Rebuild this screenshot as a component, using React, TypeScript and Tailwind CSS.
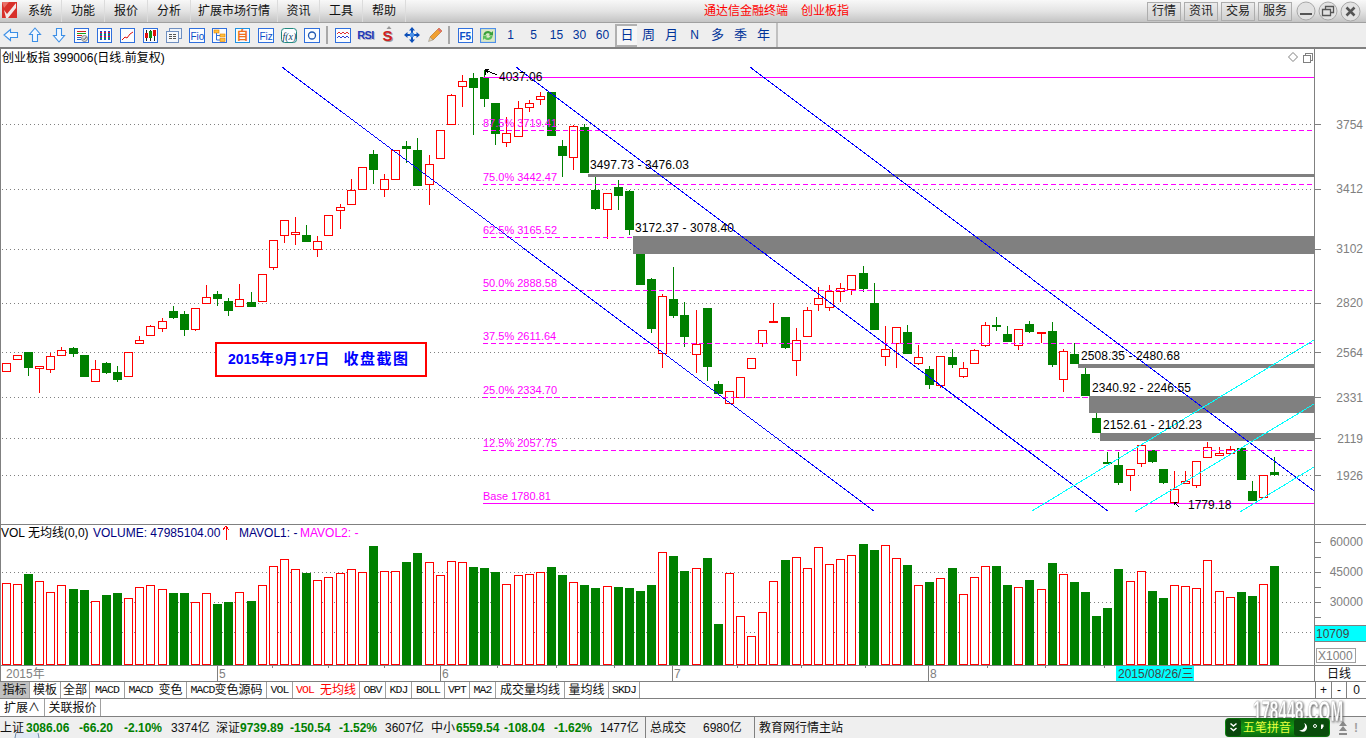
import React from "react";

const R = 1;
const G = 0;
// top, bottom, high, low (0 = no wick), colour
const bars: number[][] = [
  [363,371,0,0,R],[355,359,0,0,R],[352,367,0,376,G],[366,368,0,393,R],[356,369,353,373,R],[350,355,347,356,R],[348,353,347,357,G],[355,376,0,0,G],
  [369,381,360,382,R],[363,372,362,374,G],[372,379,366,382,G],[352,376,0,0,R],[340,343,336,0,R],[326,335,325,0,R],[321,328,318,332,R],[311,317,306,319,G],
  [314,329,311,336,G],[308,329,0,331,R],[297,303,285,0,R],[294,298,291,306,G],[301,310,298,316,G],[299,306,284,0,R],[302,306,292,307,G],[274,301,0,0,R],
  [240,267,0,270,R],[220,235,0,243,R],[232,234,217,245,R],[235,241,225,242,G],[241,249,236,257,R],[215,235,0,0,R],[207,210,204,229,R],[190,204,179,0,R],
  [167,189,0,0,R],[154,169,150,184,G],[179,189,174,197,R],[150,179,0,0,R],[146,148,141,163,G],[150,185,138,0,G],[164,184,155,205,R],[130,158,0,0,R],
  [95,124,94,0,R],[81,86,75,107,R],[78,87,73,135,G],[77,98,70,107,G],[103,133,0,145,G],[133,142,117,147,R],[108,136,101,137,R],[103,107,100,112,R],
  [96,99,92,105,R],[92,135,0,136,G],[146,155,140,177,G],[126,157,125,170,R],[127,172,124,173,G],[190,208,177,210,G],[193,209,0,239,R],[187,195,180,210,G],
  [191,229,190,235,G],[240,284,0,285,G],[279,328,278,333,G],[296,353,294,368,R],[299,315,267,318,G],[315,336,302,347,G],[344,354,310,373,R],[308,366,0,381,G],
  [384,393,381,0,G],[391,403,0,0,R],[377,397,0,0,R],[358,368,0,369,R],[330,343,0,347,R],[321,322,303,0,R],[317,347,0,349,G],[340,360,328,376,R],
  [310,336,307,0,R],[298,304,287,311,R],[291,307,285,311,R],[288,291,283,302,R],[275,289,0,295,R],[273,288,266,292,G],[303,329,283,330,G],[349,356,326,366,R],
  [327,343,0,368,R],[332,353,325,354,G],[357,363,345,365,R],[369,384,366,389,G],[356,385,0,388,R],[357,364,349,368,G],[368,376,362,378,R],[350,363,349,0,R],
  [325,345,322,347,R],[325,326,317,331,G],[334,341,326,0,G],[329,345,0,350,R],[324,331,321,333,G],[332,333,0,343,R],[331,364,322,367,G],[351,379,349,392,R],
  [354,363,343,0,G],[374,395,368,0,G],[418,432,413,0,G],[462,463,452,0,G],[465,482,452,485,G],[469,475,0,491,R],[445,463,0,467,R],[450,461,0,463,G],
  [469,482,0,484,G],[489,502,471,0,R],[481,483,471,0,R],[461,485,0,488,R],[447,457,442,458,R],[453,455,447,0,R],[449,453,446,0,R],[448,479,0,0,G],
  [491,500,481,0,G],[475,497,0,498,R],[472,474,457,476,G],
];
// top of each volume bar; negative = green
const vols = [
  583,584,-574,581,592,585,-589,-590,601,-595,-593,598,587,585,589,-593,-593,602,593,-604,-602,592,-601,585,566,559,569,-573,580,577,573,569,
  572,-546,571,571,-562,-553,562,575,561,562,-567,-568,-572,584,575,574,572,-567,-575,582,-585,-588,586,-587,-588,-591,-585,552,-556,-571,
  568,-558,-624,573,616,636,612,581,-560,557,568,547,564,559,555,-544,-550,545,558,-565,585,-582,578,-568,594,577,566,-566,-585,587,-580,589,
  -563,574,-582,-592,-616,-608,-569,581,571,-591,-598,585,586,588,560,591,597,-592,-596,584,-566,
];
const cx = (i: number) => Math.floor(6.3 + 11.126 * i);

const RED = "#ff0000";
const GREEN = "#008000";
const GRAY = "#808080";

function Bar({ i, top, bot, color }: { i: number; top: number; bot: number; color: number }) {
  const x = cx(i) - 4;
  if (color === G) return <rect x={x} y={top} width={9} height={bot - top + 1} fill={GREEN} />;
  return <rect x={x + 0.5} y={top + 0.5} width={8} height={Math.max(bot - top, 1)} fill="#fff" stroke={RED} />;
}

const fibs = [
  ["87.5% 3719.41", 130, 127],
  ["75.0% 3442.47", 184, 181],
  ["62.5% 3165.52", 237, 234],
  ["50.0% 2888.58", 290, 287],
  ["37.5% 2611.64", 343, 340],
  ["25.0% 2334.70", 397, 394],
  ["12.5% 2057.75", 450, 447],
] as const;
const zones = [
  [588, 174, 3],
  [633, 236, 18],
  [1078, 364, 4],
  [1089, 396, 17],
  [1100, 433, 8],
];
const zoneLabels = [
  ["3497.73 - 3476.03", 590, 169],
  ["3172.37 - 3078.40", 635, 232],
  ["2508.35 - 2480.68", 1081, 360],
  ["2340.92 - 2246.55", 1092, 392],
  ["2152.61 - 2102.23", 1103, 429],
] as const;
const grid = [124, 189, 249, 303, 352, 397, 438, 475];
const axisLabels = [
  ["3754", 125],
  ["3412", 189],
  ["3102", 249],
  ["2820", 303],
  ["2564", 353],
  ["2331", 398],
  ["2119", 439],
  ["1926", 476],
] as const;

function PriceChart() {
  return (
    <svg width={1366} height={475} viewBox="0 49 1366 475" className="block">
      <rect x={0} y={49} width={1366} height={475} fill="#fff" />
      <rect x={0} y={49} width={1} height={475} fill={GRAY} />
      <rect x={1314} y={49} width={1} height={475} fill={GRAY} />
      <g shapeRendering="crispEdges">
        {grid.map((y) => (
          <line key={y} x1={2} x2={1314} y1={y + 0.5} y2={y + 0.5} stroke={GRAY} strokeDasharray="1 3" />
        ))}
        {grid.map((y) => (
          <rect key={y} x={1315} y={y} width={6} height={1} fill={GRAY} />
        ))}
        {bars.map(([t, b, h, l, c], i) => (
          <g key={i}>
            {h > 0 && <rect x={cx(i)} y={h} width={1} height={t - h} fill={c === R ? RED : GREEN} />}
            {l > 0 && <rect x={cx(i)} y={b} width={1} height={l - b} fill={c === R ? RED : GREEN} />}
            <Bar i={i} top={t} bot={b} color={c} />
          </g>
        ))}
        {fibs.map(([, y]) => (
          <line key={y} x1={483} x2={1314} y1={y + 0.5} y2={y + 0.5} stroke="#ff00ff" strokeDasharray="5 3" />
        ))}
        <line x1={483} x2={1314} y1={77.5} y2={77.5} stroke="#ff00ff" />
        <line x1={483} x2={1314} y1={503.5} y2={503.5} stroke="#ff00ff" />
        {zones.map(([x, y, h]) => (
          <rect key={x} x={x} y={y} width={1314 - x} height={h} fill={GRAY} />
        ))}
        <line x1={282} y1={67} x2={874} y2={511} stroke="#0000ff" />
        <line x1={516} y1={67} x2={1108} y2={511} stroke="#0000ff" />
        <line x1={750} y1={67} x2={1314} y2={491} stroke="#0000ff" />
        <line x1={1032} y1={511} x2={1314} y2={340} stroke="#00ffff" />
        <line x1={1135} y1={512} x2={1314} y2={404} stroke="#00ffff" />
        <line x1={1240} y1={512} x2={1314} y2={467} stroke="#00ffff" />
      </g>
      <g fontSize={11} fill="#ff00ff">
        {fibs.map(([t, , y]) => (
          <text key={t} x={483} y={y}>
            {t}
          </text>
        ))}
        <text x={483} y={500}>
          Base 1780.81
        </text>
      </g>
      <g fontSize={12} fill="#000">
        {zoneLabels.map(([t, x, y]) => (
          <text key={t} x={x} y={y} textLength={99}>
            {t}
          </text>
        ))}
        <text x={499} y={81}>
          4037.06
        </text>
        <text x={1188} y={509}>
          1779.18
        </text>
        <text x={2} y={62}>
          创业板指 399006(日线.前复权)
        </text>
      </g>
      <g fill="none" stroke="#000" shapeRendering="crispEdges">
        <path d="M485 75V69h4M485 70L497 75M485 70l3 3" />
        <path d="M1179 507L1174 502M1174 502v3M1174 502h3" />
      </g>
      <g fill="none" stroke={GRAY}>
        <path d="M1293 52.5l4.5 4.5-4.5 4.5-4.5-4.5z" />
        <path d="M1303.5 55.5h7v7h-7zM1305.5 55.5v-2h7v7h-2" shapeRendering="crispEdges" />
      </g>
      <g fontSize={12} fill={GRAY} textAnchor="end">
        {axisLabels.map(([t, y]) => (
          <text key={t} x={1363} y={y + 4}>
            {t}
          </text>
        ))}
      </g>
    </svg>
  );
}

function VolumeChart() {
  return (
    <svg width={1366} height={141} viewBox="0 524 1366 141" className="block">
      <rect x={0} y={524} width={1366} height={141} fill="#fff" />
      <rect x={0} y={524} width={1366} height={1} fill={GRAY} />
      <rect x={0} y={524} width={1} height={141} fill={GRAY} />
      <rect x={1314} y={524} width={1} height={141} fill={GRAY} />
      <g shapeRendering="crispEdges">
        {[572, 602, 632].map((y) => (
          <line key={y} x1={2} x2={1314} y1={y + 0.5} y2={y + 0.5} stroke={GRAY} strokeDasharray="1 3" />
        ))}
        {[542, 557, 572, 587, 602, 617].map((y) => (
          <rect key={y} x={1315} y={y} width={6} height={1} fill={GRAY} />
        ))}
        {vols.map((v, i) => (
          <Bar key={i} i={i} top={Math.abs(v)} bot={664} color={v < 0 ? G : R} />
        ))}
      </g>
      <g fontSize={12}>
        <text x={1} y={537} fill="#000">
          VOL 无均线(0,0)
        </text>
        <text x={93} y={537} fill="#000080">
          VOLUME: 47985104.00
        </text>
        <text x={239} y={537} fill="#000080">
          MAVOL1: -
        </text>
        <text x={300} y={537} fill="#ff00ff">
          MAVOL2: -
        </text>
      </g>
      <path d="M226 540V527M223 530l3-4 3 4" stroke={RED} fill="none" shapeRendering="crispEdges" />
      <g fontSize={12} fill={GRAY} textAnchor="end">
        <text x={1363} y={546}>
          60000
        </text>
        <text x={1363} y={576}>
          45000
        </text>
        <text x={1363} y={606}>
          30000
        </text>
      </g>
      <rect x={1315} y={625} width={51} height={17} fill="#00ffff" />
      <rect x={1315} y={625} width={51} height={1} fill={GRAY} />
      <rect x={1315} y={641} width={51} height={1} fill={GRAY} />
      <text x={1316} y={638} fontSize={12} fill="#444">
        10709
      </text>
      <rect x={1316.5} y={648.5} width={39} height={14} fill="#fff" stroke="#a0a0a0" shapeRendering="crispEdges" />
      <text x={1318} y={660} fontSize={12} fill={GRAY}>
        X1000
      </text>
    </svg>
  );
}

function DateAxis() {
  const majors = [
    [217, "5"],
    [440, "6"],
    [672, "7"],
    [928, "8"],
  ] as const;
  return (
    <svg width={1366} height={17} viewBox="0 665 1366 17" className="block">
      <rect x={0} y={665} width={1366} height={17} fill="#fff" />
      <g shapeRendering="crispEdges" fill={GRAY}>
        <rect x={0} y={665} width={1366} height={1} />
        <rect x={0} y={681} width={1366} height={1} />
        <rect x={1314} y={665} width={1} height={17} />
        <rect x={0} y={665} width={1} height={17} />
        {majors.map(([x]) => (
          <rect key={x} x={x} y={665} width={1} height={17} />
        ))}
        {[272, 328, 384, 497, 556, 614, 737, 801, 865, 987, 1045, 1104].map((x) => (
          <rect key={x} x={x} y={665} width={1} height={3} />
        ))}
      </g>
      <g fontSize={12} fill={GRAY}>
        <text x={6} y={678}>
          2015年
        </text>
        {majors.map(([x, t]) => (
          <text key={x} x={x + 2} y={678}>
            {t}
          </text>
        ))}
      </g>
      <rect x={1116} y={666} width={78} height={15} fill="#00ffff" />
      <text x={1118} y={678} fontSize={12} fill="#444">
        2015/08/26/三
      </text>
      <text x={1327} y={678} fontSize={12} fill="#111">
        日线
      </text>
    </svg>
  );
}

/* ---------- toolbar icons ---------- */
const BLUE = "#2f6fdc";

function Frame({ children, stroke = BLUE, w = 15 }: { children?: React.ReactNode; stroke?: string; w?: number }) {
  return (
    <svg width={w} height={15} viewBox={`0 0 ${w} 15`}>
      <rect x={0.5} y={0.5} width={w - 1} height={14} fill="#fbfdff" stroke={stroke} shapeRendering="crispEdges" />
      {children}
    </svg>
  );
}

function ArrowIcon({ dir }: { dir: "left" | "up" | "down" }) {
  const rot = dir === "left" ? 0 : dir === "up" ? 90 : -90;
  return (
    <svg width={16} height={16} viewBox="0 0 16 16">
      <path
        d="M1 8L7.5 2.5V5.5H14.5V10.5H7.5V13.5Z"
        fill="#f1f8ff"
        stroke="#3c8fe6"
        strokeWidth={1.1}
        transform={`rotate(${rot} 8 8)`}
      />
    </svg>
  );
}

function Slot({ children, className = "w-[23px]" }: { children: React.ReactNode; className?: string }) {
  return <div className={`flex shrink-0 items-center justify-center ${className}`}>{children}</div>;
}

function Toolbar() {
  return (
    <div className="flex h-[26px] items-center border-b-2 border-[#808080] bg-[#eeeeee]">
      <div className="flex h-full items-center">
        <Slot className="w-[22px]">
          <ArrowIcon dir="left" />
        </Slot>
        <Slot className="w-[25px]">
          <ArrowIcon dir="up" />
        </Slot>
        <Slot>
          <ArrowIcon dir="down" />
        </Slot>
        <Slot>
          <Frame>
            <path d="M3 3.5h9" stroke="#d02020" />
            <path d="M3 5.5h9" stroke="#18a018" />
            <path d="M3 7.5h5" stroke="#d02020" />
            <path d="M3 9.5h4M3 11.5h4" stroke="#2060c0" />
            <circle cx={10.5} cy={10.5} r={3} fill="#ddd" stroke="#888" />
            <path d="M9 10.5l1.2 1.2L12.4 9" fill="none" stroke="#555" />
          </Frame>
        </Slot>
        <Slot>
          <Frame>
            <path d="M3 3h2v9H3zM7 3h2v9H7zM11 3h2v9h-2z" fill="#2040d0" />
            <path d="M3 4.5h10M3 8.5h10" stroke="#e02020" strokeDasharray="2 2" />
            <path d="M3 6.5h10M3 10.5h10" stroke="#10a030" strokeDasharray="2 2" />
          </Frame>
        </Slot>
        <Slot>
          <Frame>
            <path d="M2 12l3-3 2 1 3-4 3-2" fill="none" stroke="#e01010" />
          </Frame>
        </Slot>
        <Slot>
          <Frame>
            <path d="M3.5 2v11M7.5 2v11M11.5 2v11" stroke="#222" />
            <rect x={2} y={5} width={3} height={5} fill="#e01010" />
            <rect x={6} y={3} width={3} height={7} fill="#109010" />
            <rect x={10} y={2} width={3} height={6} fill="#e01010" />
          </Frame>
        </Slot>
        <Slot>
          <svg width={16} height={15} viewBox="0 0 16 15">
            <rect x={3.5} y={0.5} width={12} height={10} fill="#eef3fa" stroke="#6f8fc0" />
            <rect x={0.5} y={3.5} width={12} height={11} fill="#f5f8fc" stroke="#6f8fc0" />
            <path d="M3 6.5h3M7 6.5h3M3 8.5h3M7 8.5h3M3 10.5h3M7 10.5h3" stroke="#555" />
          </svg>
        </Slot>
        <Slot>
          <Frame w={16}>
            <text x={1.5} y={11.5} fontSize={10} fill="#0b4fc8">
              Fio
            </text>
          </Frame>
        </Slot>
        <Slot>
          <Frame>
            <rect x={2} y={2} width={5} height={3} fill="#ffc040" stroke="#e08000" strokeWidth={0.6} />
            <rect x={8} y={6} width={5} height={3} fill="#ffc040" stroke="#e08000" strokeWidth={0.6} />
            <rect x={8} y={10.5} width={5} height={3} fill="#ffc040" stroke="#e08000" strokeWidth={0.6} />
            <path d="M4.5 5v7H8M4.5 7.5H8" fill="none" stroke="#2f6fdc" />
          </Frame>
        </Slot>
        <Slot>
          <Frame stroke="#2090e0">
            <text x={1.5} y={12} fontSize={12} fill="#f07020" fontWeight={700}>
              自
            </text>
          </Frame>
        </Slot>
        <Slot>
          <Frame w={16}>
            <text x={1.5} y={11.5} fontSize={10} fill="#0b4fc8">
              Fiz
            </text>
          </Frame>
        </Slot>
        <Slot>
          <svg width={16} height={15} viewBox="0 0 16 15">
            <rect x={0.5} y={0.5} width={15} height={14} rx={3} fill="#fbfdff" stroke="#208880" />
            <text x={1.5} y={11.5} fontSize={10} fontStyle="italic" fill="#104060" className="font-['Liberation_Serif',serif]">
              f(x)
            </text>
          </svg>
        </Slot>
        <Slot>
          <Frame w={16}>
            <circle cx={8} cy={7.5} r={3.5} fill="none" stroke="#2058b0" strokeWidth={1.3} />
          </Frame>
        </Slot>
      </div>
      <div className="mx-[3px] h-[18px] w-[2px] shrink-0 bg-[#a8a8a8]" />
      <div className="flex h-full items-center">
        <Slot>
          <Frame w={16}>
            <path d="M2 6l2-2 2 2 2-2 2 2 2-2 2 2" fill="none" stroke="#e03030" />
            <path d="M2 10l2-2 2 2 2-2 2 2 2-2 2 2" fill="none" stroke="#3040d0" />
          </Frame>
        </Slot>
        <Slot>
          <span className="text-[11px] leading-none font-bold tracking-[-0.6px] text-[#2238b8] [text-shadow:1px_1px_0_#b8b8c8]">RSI</span>
        </Slot>
        <Slot>
          <svg width={14} height={18} viewBox="0 0 14 18">
            <path d="M7 0L9.5 3h-5z" fill="#999" />
            <text x={1.5} y={16} fontSize={15} fontWeight={700} fill="#999">
              S
            </text>
            <text x={0.5} y={15} fontSize={15} fontWeight={700} fill="#d02020">
              S
            </text>
          </svg>
        </Slot>
        <Slot>
          <svg width={16} height={16} viewBox="0 0 16 16">
            <path d="M8 0l3 3.5H9V7h3.5V5L16 8l-3.5 3V9H9v3.500h2L8 16l-3-3.500h2V9H3.500v2L0 8l3.500-3v2H7V3.500H5z" fill="#0c4fb8" />
            <circle cx={8} cy={8} r={2.4} fill="#4a90e8" />
          </svg>
        </Slot>
        <Slot>
          <svg width={16} height={16} viewBox="0 0 16 16">
            <path d="M12 1l3 3-9 9-3-3z" fill="#f0a030" stroke="#b86a10" strokeWidth={0.6} />
            <path d="M3 10l3 3-4.500 1.500z" fill="#e8d0a0" stroke="#888" strokeWidth={0.5} />
            <path d="M12 1l3 3-1.500 1.500-3-3z" fill="#e07070" />
          </svg>
        </Slot>
      </div>
      <div className="mx-[2px] h-[18px] w-[2px] shrink-0 bg-[#a8a8a8]" />
      <div className="flex h-full items-center">
        <Slot className="w-[26px]">
          <Frame>
            <text x={1.5} y={11.5} fontSize={10} fill="#0b4fc8" fontWeight={700}>
              F5
            </text>
          </Frame>
        </Slot>
        <Slot className="w-[20px]">
          <svg width={16} height={15} viewBox="0 0 16 15">
            <rect x={0.5} y={0.5} width={15} height={14} fill="#dbe8c8" stroke="#4f8fe8" strokeWidth={1.2} />
            <path d="M3.500 7a4.500 4 0 0 1 8-2.500L13 3v4.500H8.500l1.500-1.500a2.700 2.500 0 0 0-4.500 1z" fill="#3aa03a" />
            <path d="M12.500 8a4.500 4 0 0 1-8 2.500L3 12V7.500h4.500L6 9a2.700 2.500 0 0 0 4.500-1z" fill="#5cc05c" />
          </svg>
        </Slot>
        <div className="flex items-center text-[12px] text-[#003399]">
          <span className="ml-[1px] w-[23px] text-center">1</span>
          <span className="w-[23px] text-center">5</span>
          <span className="w-[23px] text-center">15</span>
          <span className="w-[23px] text-center">30</span>
          <span className="w-[23px] text-center">60</span>
        </div>
        <div className="flex h-full items-center text-[13px] text-[#003399]">
          <span className="ml-[1px] flex h-[23px] w-[22px] items-center justify-center border-2 border-r-0 border-[#b0b0b0] bg-[#f6f6f6]">日</span>
          <span className="w-[23px] text-center">周</span>
          <span className="w-[23px] text-center">月</span>
          <span className="w-[23px] text-center text-[12px]">N</span>
          <span className="w-[23px] text-center">多</span>
          <span className="w-[23px] text-center">季</span>
          <span className="w-[23px] text-center">年</span>
          <div className="ml-[1px] h-full w-[2px] bg-[#c0c0c0]" />
        </div>
      </div>
    </div>
  );
}

const menus = [
  ["系统", "w-[43px]"],
  ["功能", "w-[43px]"],
  ["报价", "w-[43px]"],
  ["分析", "w-[43px]"],
  ["扩展市场行情", "w-[87px]"],
  ["资讯", "w-[42px]"],
  ["工具", "w-[43px]"],
  ["帮助", "w-[43px]"],
];

function MenuBar() {
  return (
    <div className="flex h-[23px] items-center border-b border-[#a0a0a0] bg-linear-to-b from-[#f8f8f8] via-[#e4e4e4] to-[#c4c4c4] text-[12px]">
      <svg width={18} height={18} viewBox="0 0 18 18" className="ml-[1px] shrink-0 -translate-y-[1px]">
        <rect x={1} y={1} width={15} height={16} fill="#d8302a" />
        <path d="M3 9l3 4 9-11v5L7 17H5z" fill="#f4e8e8" />
        <path d="M1 1h7L3 7z" fill="#e87068" />
      </svg>
      {menus.map(([t, w]) => (
        <div key={t} className={`flex h-full items-center justify-center border-r border-[#dcdcdc] text-[#111] ${w}`}>
          {t}
        </div>
      ))}
      <div className="ml-[298px] flex gap-[13px] text-[#ff0000]">
        <span>通达信金融终端</span>
        <span>创业板指</span>
      </div>
      <div className="ml-auto flex items-center">
        {["行情", "资讯", "交易", "服务"].map((t) => (
          <div key={t} className="mr-[3px] flex h-[19px] w-[34px] items-center justify-center border border-[#adadad] bg-linear-to-b from-[#ececec] to-[#cfcfcf] text-[#222]">
            {t}
          </div>
        ))}
        <div className="ml-[1px] flex items-center gap-[2px] pr-[5px]">
          <svg width={20} height={20} viewBox="0 0 20 20">
            <circle cx={10} cy={10} r={9} fill="#e2e2e2" stroke="#a8a8a8" />
            <rect x={4} y={12} width={12} height={2} fill="#555" />
          </svg>
          <svg width={20} height={20} viewBox="0 0 20 20">
            <circle cx={10} cy={10} r={9} fill="#e2e2e2" stroke="#a8a8a8" />
            <path d="M4.500 8.500h8v6h-8zM7.500 8V5.500h8v6H13" fill="none" stroke="#555" strokeWidth={1.300} />
          </svg>
          <svg width={21} height={21} viewBox="0 0 21 21">
            <circle cx={10.500} cy={10.500} r={9.500} fill="#e2e2e2" stroke="#a8a8a8" />
            <path d="M6.500 6.500l8 8M14.500 6.500l-8 8" stroke="#555" strokeWidth={2.500} />
          </svg>
        </div>
      </div>
    </div>
  );
}

const tabs = [
  ["指标", "w-[30px] bg-[#c0c0c0]"],
  ["模板", "w-[31px]"],
  ["全部", "w-[29px]"],
  ["MACD", "w-[35px]"],
  ["MACD 变色", "w-[62px]"],
  ["MACD变色源码", "w-[80px]"],
  ["VOL", "w-[26px]"],
  ["VOL 无均线", "w-[67px] text-[#ff0000]"],
  ["OBV", "w-[26px]"],
  ["KDJ", "w-[26px]"],
  ["BOLL", "w-[33px]"],
  ["VPT", "w-[25px]"],
  ["MA2", "w-[26px]"],
  ["成交量均线", "w-[69px]"],
  ["量均线", "w-[44px]"],
  ["SKDJ", "w-[31px]"],
];

function Label({ text }: { text: string }) {
  const parts = text.match(/[\x20-\x7e]+|[^\x20-\x7e]+/g) ?? [];
  return (
    <>
      {parts.map((p, i) =>
        /[\x20-\x7e]/.test(p[0]) ? (
          <span key={i} className="whitespace-pre font-['Liberation_Mono',monospace] text-[11.5px] tracking-[-0.9px]">
            {p}
          </span>
        ) : (
          <span key={i}>{p}</span>
        ),
      )}
    </>
  );
}

function TabRows() {
  return (
    <div className="bg-white text-[12px] text-[#111]">
      <div className="flex h-[17px] border-b border-[#808080]">
        {tabs.map(([t, c]) => (
          <div key={t} className={`flex shrink-0 items-center justify-center border-r border-[#a0a0a0] ${c}`}>
            <Label text={t} />
          </div>
        ))}
        <div className="ml-auto flex">
          <div className="flex w-[16px] items-center justify-center border-l border-[#808080]">+</div>
          <div className="flex w-[15px] items-center justify-center border-l border-[#808080]">-</div>
          <div className="flex w-[20px] items-center justify-center border-l border-[#808080]">0</div>
        </div>
      </div>
      <div className="flex h-[18px] border-b border-[#808080]">
        <div className="flex w-[45px] items-center justify-center border-r border-[#a0a0a0]">扩展∧</div>
        <div className="flex w-[56px] items-center justify-center border-r border-[#a0a0a0]">关联报价</div>
      </div>
    </div>
  );
}

const status = [
  ["上证", "w-[26px] text-[#111]"],
  ["3086.06", "w-[53px] font-bold text-[#008000]"],
  ["-66.20", "w-[45px] font-bold text-[#008000]"],
  ["-2.10%", "w-[47px] font-bold text-[#008000]"],
  ["3374亿", "w-[45px] text-[#111]"],
  ["深证", "w-[24px] text-[#111]"],
  ["9739.89", "w-[50px] font-bold text-[#008000]"],
  ["-150.54", "w-[49px] font-bold text-[#008000]"],
  ["-1.52%", "w-[46px] font-bold text-[#008000]"],
  ["3607亿", "w-[46px] text-[#111]"],
  ["中小", "w-[25px] text-[#111]"],
  ["6559.54", "w-[48px] font-bold text-[#008000]"],
  ["-108.04", "w-[50px] font-bold text-[#008000]"],
  ["-1.62%", "w-[46px] font-bold text-[#008000]"],
  ["1477亿", "w-[45px] text-[#111]"],
];

function StatusBar() {
  return (
    <div className="relative flex h-[21px] items-center overflow-hidden bg-[#efefef] text-[12px] leading-none">
      {status.map(([t, c], i) => (
        <span key={i} className={`shrink-0 whitespace-nowrap ${c}`}>
          {t}
        </span>
      ))}
      <div className="flex h-full w-[58px] shrink-0 items-center border-l border-[#808080] pl-[4px] text-[#111]">总成交</div>
      <div className="w-[51px] shrink-0 text-[#111]">6980亿</div>
      <div className="flex h-full shrink-0 items-center border-l border-[#808080] pl-[4px] text-[#111]">教育网行情主站</div>
      <div className="relative z-20 ml-[382px] flex h-[19px] w-[105px] shrink-0 items-center rounded-[4px] bg-linear-to-b from-[#0b6a0c] via-[#129a14] to-[#0a6a0c]">
        <svg width={15} height={17} viewBox="0 0 15 17" className="ml-[1px] shrink-0">
          <rect x={0} y={0} width={15} height={17} rx={3} fill="#0a480c" />
          <path d="M4.500 4.500l3 2.500 3-2.500M4.500 9l3 2.500 3-2.500" fill="none" stroke="#fff" strokeWidth={1.500} />
        </svg>
        <span className="ml-[2px] w-[50px] shrink-0 whitespace-nowrap text-[12px] text-[#eaff40]">五笔拼音</span>
        <svg width={35} height={17} viewBox="0 0 35 17" className="ml-[1px] shrink-0">
          <rect x={0} y={0} width={35} height={17} rx={3} fill="#0a4c0c" />
          <path d="M10 4a4.500 4.500 0 1 1-5 7a4.500 4.500 0 0 0 5-7z" fill="#fff" />
          <circle cx={21} cy={7} r={1.500} fill="none" stroke="#fff" />
          <path d="M27 5.500h2.500v2l-1.500 2.500h-1z" fill="#fff" />
        </svg>
      </div>
      <svg width={12} height={16} viewBox="0 0 12 16" className="ml-[7px] shrink-0">
        <path d="M6 1L10 6H2zM6 6L10 11H2z" fill="#8a8a8a" />
        <rect x={2} y={13} width={8} height={2} fill="#8a8a8a" />
      </svg>
      <span className="ml-[5px] font-bold text-[#a0a0a0]">!</span>
      <svg width={26} height={5} viewBox="0 0 26 5" className="absolute bottom-0 left-[14px]">
        <path d="M1 5a12 12 0 0 1 24 0" fill="#dfe8f4" stroke="#6a88a8" />
      </svg>
    </div>
  );
}

export default function App() {
  return (
    <div className="relative h-[738px] w-[1366px] overflow-hidden bg-white font-['Liberation_Sans','Noto_Sans_CJK_SC',sans-serif]">
      <MenuBar />
      <Toolbar />
      <div className="relative">
        <PriceChart />
        <div className="absolute top-[293px] left-[215px] flex h-[35px] w-[212px] items-center border-2 border-[#ff0000] bg-white pl-[11px] font-bold text-[#0000ff]">
          <span className="text-[14px]">2015</span>
          <span className="text-[15px] tracking-[1px]">年</span>
          <span className="text-[14px]">9</span>
          <span className="text-[15px] tracking-[1px]">月</span>
          <span className="text-[14px]">17</span>
          <span className="text-[15px] tracking-[1px]">日</span>
          <span className="ml-[13px] text-[15px] tracking-[1.5px]">收盘截图</span>
        </div>
      </div>
      <VolumeChart />
      <DateAxis />
      <TabRows />
      <StatusBar />
      <svg width={100} height={30} viewBox="0 0 100 30" className="absolute top-[697px] left-[1250px] z-10 overflow-visible drop-shadow-[1px_1px_1px_#666666]">
        <text x={3} y={24} fontSize={29} fontWeight={700} textLength={90} lengthAdjust="spacingAndGlyphs" fill="#ffffff" stroke="#bdbdbd" strokeWidth={0.5}>
          178448.COM
        </text>
      </svg>
    </div>
  );
}
